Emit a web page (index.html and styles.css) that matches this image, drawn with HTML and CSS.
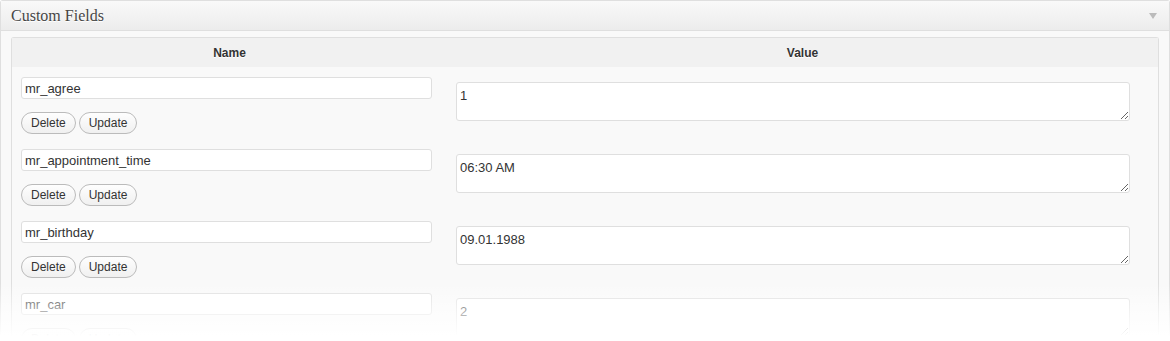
FILE: index.html
```html
<!DOCTYPE html>
<html>
<head>
    <meta charset="UTF-8">
    <title>Custom Fields</title>
    <link rel="stylesheet" href="styles.css">
</head>
<body>
    <div class="postbox">
        <div class="postbox-head">
            <h3>Custom Fields</h3>
            <span class="toggle-arrow"></span>
        </div>

        <div class="postbox-inside">
            <table class="list-table">
                <thead>
                    <tr>
                        <th class="col-name">Name</th>
                        <th class="col-value">Value</th>
                    </tr>
                </thead>
                <tbody>
                    <tr>
                        <td class="col-name">
                            <input type="text" class="meta-key" value="mr_agree">
                            <div class="meta-actions">
                                <button type="button" class="pill-btn">Delete</button>
                                <button type="button" class="pill-btn">Update</button>
                            </div>
                        </td>
                        <td class="col-value"><textarea class="meta-value">1</textarea></td>
                    </tr>
                    <tr>
                        <td class="col-name">
                            <input type="text" class="meta-key" value="mr_appointment_time">
                            <div class="meta-actions">
                                <button type="button" class="pill-btn">Delete</button>
                                <button type="button" class="pill-btn">Update</button>
                            </div>
                        </td>
                        <td class="col-value"><textarea class="meta-value">06:30 AM</textarea></td>
                    </tr>
                    <tr>
                        <td class="col-name">
                            <input type="text" class="meta-key" value="mr_birthday">
                            <div class="meta-actions">
                                <button type="button" class="pill-btn">Delete</button>
                                <button type="button" class="pill-btn">Update</button>
                            </div>
                        </td>
                        <td class="col-value"><textarea class="meta-value">09.01.1988</textarea></td>
                    </tr>
                    <tr>
                        <td class="col-name">
                            <input type="text" class="meta-key" value="mr_car">
                            <div class="meta-actions">
                                <button type="button" class="pill-btn">Delete</button>
                                <button type="button" class="pill-btn">Update</button>
                            </div>
                        </td>
                        <td class="col-value"><textarea class="meta-value">2</textarea></td>
                    </tr>
                </tbody>
            </table>
        </div>

        <!-- fade the list out at the bottom edge -->
        <div class="fade-out"></div>
    </div>
</body>
</html>
```

FILE: styles.css
```css
/* Custom Fields box */
body {
    margin: 0;
    background: #fff;
    font-family: "Liberation Sans", Arial, sans-serif;
    color: #333;
    height: 341px;
    overflow: hidden;
}

.postbox {
    position: relative;
    width: 1170px;
    box-sizing: border-box;
    border: 1px solid #dfdfdf;
    border-bottom: none;
    border-radius: 3px 3px 0 0;
    background: #f9f9f9;
    height: 341px;
}

.postbox-head {
    display: flex;
    align-items: center;
    justify-content: space-between;
    height: 29px;
    padding: 0 10px;
    border-bottom: 1px solid #dfdfdf;
    background: linear-gradient(to bottom, #f9f9f9, #ececec);
}

.postbox-head h3 {
    margin: 0;
    font-family: "Liberation Serif", Georgia, serif;
    font-size: 16px;
    font-weight: normal;
    color: #464646;
    text-shadow: 0 1px 0 #fff;
}

.toggle-arrow {
    width: 0;
    height: 0;
    border-left: 4px solid transparent;
    border-right: 4px solid transparent;
    border-top: 6px solid #bbb;
    margin-top: 1px;
    margin-right: 2px;
}

.postbox-inside {
    padding: 6px 9px 0 10px;
}

.list-table {
    width: 1148px;
    border: 1px solid #dfdfdf;
    border-bottom: none;
    border-spacing: 0;
    border-radius: 3px 3px 0 0;
    table-layout: fixed;
}

.list-table th {
    height: 29px;
    padding: 0;
    line-height: 14px;
    background: #f1f1f1;
    font-size: 12px;
    font-weight: bold;
    color: #333;
    text-shadow: 0 1px 0 #fff;
    text-align: center;
}

.list-table th.col-name {
    width: 435px;
}

.list-table td {
    height: 72px;
    padding: 0;
    vertical-align: top;
    background: #f9f9f9;
}

.list-table td.col-name {
    padding: 10px 0 0 9px;
    box-sizing: border-box;
}

.list-table td.col-value {
    padding: 15px 0 0 9px;
    box-sizing: border-box;
}

.meta-key {
    display: block;
    width: 411px;
    height: 22px;
    box-sizing: border-box;
    padding: 0 3px;
    border: 1px solid #dfdfdf;
    border-radius: 3px;
    background: #fff;
    font-family: "Liberation Sans", Arial, sans-serif;
    font-size: 13px;
    color: #333;
    outline: none;
}

.meta-actions {
    display: flex;
    gap: 3px;
    margin-top: 13px;
}

.pill-btn {
    height: 22px;
    padding: 0 9px;
    border: 1px solid #bbb;
    border-radius: 11px;
    background: linear-gradient(to bottom, #fefefe, #f0f0f0);
    font-family: "Liberation Sans", Arial, sans-serif;
    font-size: 12px;
    color: #333;
    line-height: 19px;
    cursor: pointer;
}

.meta-value {
    display: block;
    width: 674px;
    height: 39px;
    box-sizing: border-box;
    padding: 5px 3px 2px;
    margin: 0;
    border: 1px solid #dfdfdf;
    border-radius: 3px;
    background: #fff;
    font-family: "Liberation Sans", Arial, sans-serif;
    font-size: 13px;
    color: #333;
    resize: vertical;
    outline: none;
}

.fade-out {
    position: absolute;
    left: -1px;
    right: -1px;
    bottom: 0;
    height: 58px;
    background: linear-gradient(to bottom, rgba(255,255,255,0), rgba(255,255,255,0.55) 45%, #fff 92%);
    pointer-events: none;
}
```
